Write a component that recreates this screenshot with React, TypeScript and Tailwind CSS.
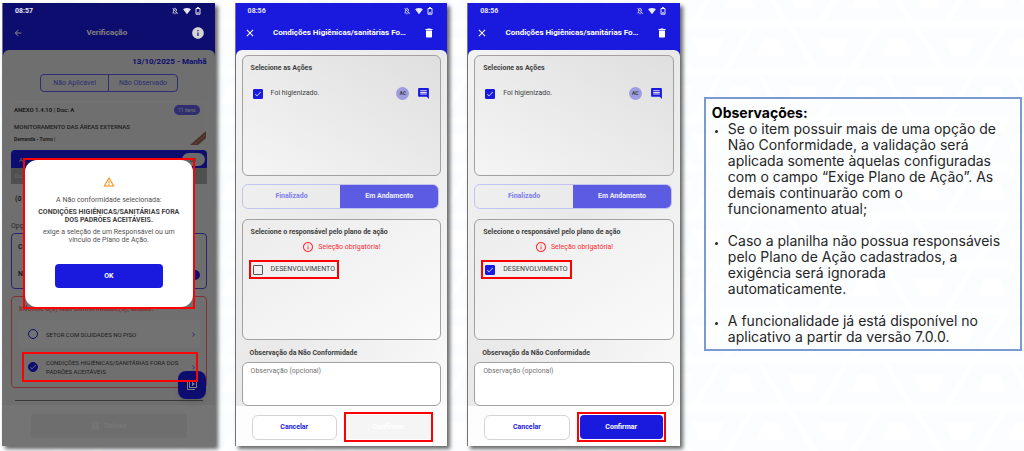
import React, { useState } from 'react';
import {
  MdArrowBack,
  MdCheck,
  MdChevronRight,
  MdClose,
  MdComment,
  MdDelete,
  MdInfo,
  MdInfoOutline,
  MdOutlineNotificationsOff,
  MdOutlineVideoLibrary,
  MdSave,
  MdSignalWifi4Bar,
  MdWarningAmber,
} from 'react-icons/md';

const BackgroundPattern: React.FC = () => (
  <svg className="absolute inset-0 -z-10 h-full w-full" aria-hidden="true">
    <defs>
      <pattern id="trapezoids" width="126" height="96" patternUnits="userSpaceOnUse">
        <g fill="#fcfdff">
          <path d="M-2 27h34l24 42h-82zM124 27h34l24 42h-82zM37 27h82l-26 42h-30z" />
          <path d="M93 75h34l24 42h-82zM6 75h82l-26 42h-30zM-33 75h34l24 42h-82z" />
          <path d="M93 -21h34l24 42h-82zM6 -21h82l-26 42h-30zM-33 -21h34l24 42h-82z" />
        </g>
        <g fill="#ffffff">
          <path d="M8 38h14l8 18h-30zM62 38h32l-8 18h-16z" />
          <path d="M103 86h14l8 18h-30zM31 86h32l-8 18h-16z" />
          <path d="M103 -10h14l8 18h-30zM31 -10h32l-8 18h-16z" />
        </g>
      </pattern>
    </defs>
    <rect width="100%" height="100%" fill="url(#trapezoids)" />
  </svg>
);

const StatusBar: React.FC<{ time: string }> = ({ time }) => (
  <div className="relative z-20 flex h-4 items-center justify-between pr-3.5 pl-3 text-white/90">
    <span className="text-[7px] font-bold">{time}</span>
    <span className="flex items-center gap-1">
      <MdOutlineNotificationsOff size={8} />
      <MdSignalWifi4Bar size={8} />
      <svg width="6" height="8" viewBox="0 0 6 8" fill="none" stroke="currentColor">
        <path d="M1 1.5h4v5.7H1zM2 .6h2M2 5.8h2" />
      </svg>
    </span>
  </div>
);

interface CheckProps {
  label: string;
  defaultChecked?: boolean;
  round?: boolean;
}

const CheckField: React.FC<CheckProps> = ({ label, defaultChecked, round }) => (
  <label className="flex flex-1 items-center gap-2 text-[7px] leading-[9px] text-neutral-700">
    <span className="relative grid shrink-0 place-items-center text-white">
      <input
        type="checkbox"
        defaultChecked={defaultChecked}
        className={
          round
            ? 'peer block size-[10px] appearance-none rounded-full border border-[#1a1adf] checked:bg-[#1a1adf]'
            : 'peer block size-[10px] appearance-none rounded-[1px] border border-neutral-600 checked:border-[#1a1adf] checked:bg-[#1a1adf]'
        }
      />
      <MdCheck size={8} className="pointer-events-none absolute hidden peer-checked:block" />
    </span>
    <span className={round ? 'text-[6px]' : ''}>{label}</span>
  </label>
);

const phoneClass =
  'relative flex flex-col border-l border-neutral-500 bg-[#1a1adf] shadow-[3px_3px_4px_rgba(0,0,0,0.6)]';

const PlanScreen: React.FC<{ selected: boolean; id: string }> = ({ selected, id }) => {
  const [status, setStatus] = useState('Em Andamento');

  return (
    <section className={phoneClass}>
      <StatusBar time="08:56" />
      <header className="flex h-7 items-center px-2 text-white">
        <button type="button" aria-label="Fechar">
          <MdClose size={12} />
        </button>
        <h1 className="flex-1 text-center text-[8px] font-bold">Condições Higiênicas/sanitárias Fo…</h1>
        <button type="button" aria-label="Excluir" className="pr-1">
          <MdDelete size={12} />
        </button>
      </header>

      <div className="mt-[3px] rounded-t-md bg-linear-to-br from-[#f3f3f3] via-[#e9e9e9] to-[#fafafa] px-1.5 pt-[5px]">
        <div className="min-h-[121px] rounded-md border border-neutral-400 bg-linear-to-tr from-neutral-100 to-[#dfdfdf] px-2 pt-2">
          <h2 className="text-[7px] leading-[9px] font-bold text-neutral-700">Selecione as Ações</h2>
          <div className="mt-3.5 flex items-center gap-2 pr-0.5 pl-0.5">
            <CheckField label="Foi higienizado." defaultChecked />
            <span className="grid size-[13px] place-items-center rounded-full bg-[#9d9de0] text-[5px] font-bold text-neutral-700">
              AC
            </span>
            <button type="button" aria-label="Comentário" className="text-[#1a1adf]">
              <MdComment size={13} />
            </button>
          </div>
        </div>

        <div className="mt-2 mr-0.5 flex h-[25px] overflow-hidden rounded-md border border-[#c3c3f3] text-[7px] font-bold">
          {['Finalizado', 'Em Andamento'].map((item) => (
            <button
              key={item}
              type="button"
              onClick={() => setStatus(item)}
              className={status === item ? 'flex-1 bg-[#5c5ce3] text-white/90' : 'flex-1 text-[#7c7cec]'}
            >
              {item}
            </button>
          ))}
        </div>

        <div className="mt-2.5 min-h-[121px] rounded-md border border-neutral-400 bg-linear-to-br from-[#ececec] to-neutral-50 px-1 pt-2">
          <h2 className="px-1 text-[7px] leading-[9px] font-bold text-neutral-700">
            Selecione o responsável pelo plano de ação
          </h2>
          <p className="mt-1 flex items-center justify-center gap-1 text-[7px] leading-[9px] text-red-500">
            <MdInfoOutline size={12} />
            Seleção obrigatória!
          </p>
          <div className="mt-[7px] ml-0.5 flex h-[19px] w-fit items-center border-2 border-[#ff0000] px-0.5">
            <CheckField label="DESENVOLVIMENTO" defaultChecked={selected} />
          </div>
        </div>

        <label htmlFor={id} className="mt-[7px] block px-2 text-[7px] leading-[13px] font-bold text-neutral-700">
          Observação da Não Conformidade
        </label>
        <textarea
          id={id}
          placeholder="Observação (opcional)"
          className="mt-0.5 block h-11 w-full resize-none rounded-md border border-neutral-400 bg-white px-2 py-1 text-[7px] leading-[9px] placeholder:text-neutral-500"
        />
      </div>

      <footer className="flex flex-1 items-center gap-[7px] bg-[#fdfdfd] pt-1.5 pr-3.5 pb-1 pl-4">
        <button
          type="button"
          className="h-[25px] flex-1 rounded-md border border-neutral-300 bg-white text-[7px] font-bold text-[#1a1adf]"
        >
          Cancelar
        </button>
        <div className="flex h-[30px] flex-1 border-2 border-[#ff0000] p-px">
          <button
            type="button"
            disabled={!selected}
            className="flex-1 rounded bg-[#1a1adf] text-[7px] font-bold text-white disabled:rounded-none disabled:bg-neutral-100"
          >
            Confirmar
          </button>
        </div>
      </footer>
    </section>
  );
};

const WarningDialog: React.FC = () => (
  <div
    role="dialog"
    aria-label="Aviso"
    className="absolute inset-x-5 top-[155px] z-30 border-2 border-[#ff0000]"
  >
    <div className="flex h-[147px] flex-col items-center rounded-xl bg-white pt-4 text-center text-[7px] leading-2 text-neutral-600">
      <MdWarningAmber size={12} className="text-orange-400" />
      <p className="mt-2">A Não conformidade selecionada:</p>
      <p className="mt-1 px-2 font-bold text-neutral-700">
        CONDIÇÕES HIGIÊNICAS/SANITÁRIAS FORA DOS PADRÕES ACEITÁVEIS.
      </p>
      <p className="mt-1 px-3">exige a seleção de um Responsável ou um vínculo de Plano de Ação.</p>
      <button type="button" className="mt-5 h-6 w-[108px] rounded bg-[#1a1adf] font-bold text-white">
        OK
      </button>
    </div>
  </div>
);

const CheckScreen: React.FC = () => (
  <section className={phoneClass}>
    <StatusBar time="08:57" />
    <header className="flex h-7 items-center px-2.5 text-white">
      <button type="button" aria-label="Voltar">
        <MdArrowBack size={10} />
      </button>
      <h1 className="flex-1 text-center text-[8px] font-bold">Verificação</h1>
      <button type="button" aria-label="Informações" className="relative z-20 text-neutral-300">
        <MdInfo size={14} />
      </button>
    </header>

    <div className="mt-[3px] rounded-t-md bg-[#dedede] px-2 pt-[7px] pb-1 text-neutral-700">
      <p className="text-right text-[8px] leading-[10px] font-bold text-[#1a1adf]">13/10/2025 - Manhã</p>
      <div className="mx-auto mt-[7px] flex h-[18px] w-[138px] rounded border border-[#5c5ce3] text-[7px] text-[#5c5ce3]">
        <button type="button" className="flex-1 border-r border-[#5c5ce3]">Não Aplicável</button>
        <button type="button" className="flex-1">Não Observado</button>
      </div>

      <div className="relative mt-[9px] h-[45px] overflow-hidden rounded border border-neutral-200 px-0.5 text-[5px] leading-[6px] font-bold">
        <div className="flex h-4 items-center justify-between pr-1 text-[6px]">
          <span>ANEXO 1.4.10 | Doc: A</span>
          <span className="rounded-full bg-[#5c5ce3] px-1 py-0.5 text-[5px] font-normal text-neutral-200">11 itens</span>
        </div>
        <p className="mt-1.5 text-[6px] font-medium">MONITORAMENTO DAS ÁREAS EXTERNAS</p>
        <p className="mt-1.5">Demanda - Turno |</p>
        <svg className="absolute right-0 bottom-0" width="16" height="14" viewBox="0 0 16 14">
          <path d="M0 14L16 0v7L8 14z" fill="#9a6250" />
          <path d="M5 13L15 4" stroke="#d8b8ac" strokeDasharray="1 1" />
        </svg>
      </div>

      <div className="mt-1 flex h-[18px] items-center justify-between rounded-t bg-[#1a1adf] pr-0.5 pl-2 text-[6px] text-neutral-300">
        <span>A</span>
        <span className="rounded-full bg-neutral-300 px-2 py-0.5 text-neutral-600">01</span>
      </div>
      <div className="h-4 bg-neutral-400 px-1 text-[6px] leading-4 text-neutral-300">Do</div>
      <p className="mt-2.5 px-1 text-[7px] leading-[10px] font-bold">(0</p>
      <p className="mt-[17px] text-[7px] leading-[10px] text-neutral-600">Opções</p>

      <div className="mt-0.5 flex h-14 flex-col justify-around rounded border border-[#4a4ae0] px-1.5 text-[7px] font-bold">
        <span>C</span>
        <span className="flex items-center justify-between">
          N
          <span className="size-2.5 rounded-full bg-[#1a1adf]" />
        </span>
      </div>

      <div className="relative mt-[7px] h-[92px] rounded border border-red-400 px-1.5 pt-2">
        <p className="px-px text-[7px] leading-[9px] font-bold text-red-400">Informe a(s) Não Conformidade(s), abaixo:</p>
        <div className="mt-1.5 flex h-7 items-center rounded bg-[#e4e4e4] pr-0.5 pl-2.5">
          <CheckField label="SETOR COM SUJIDADES NO PISO" round />
          <MdChevronRight size={9} className="text-[#5c5ce3]" />
        </div>
        <div className="relative mt-1 flex h-[30px] items-center pr-0.5 pl-2.5">
          <CheckField label="CONDIÇÕES HIGIÊNICAS/SANITÁRIAS FORA DOS PADRÕES ACEITÁVEIS." defaultChecked round />
          <MdChevronRight size={9} className="text-[#5c5ce3]" />
          <span className="absolute inset-y-0 right-0.5 left-1 z-20 border-2 border-[#ff0000]" />
        </div>
        <button
          type="button"
          aria-label="Vídeos"
          className="absolute right-0 -bottom-3 grid size-7 place-items-center rounded-lg bg-[#1a1adf] text-white shadow-md"
        >
          <MdOutlineVideoLibrary size={12} />
        </button>
      </div>
      <hr className="mx-1 mt-3 border-neutral-500" />
    </div>
    <footer className="flex flex-1 items-center justify-center bg-[#e8e8e8] px-7 py-2">
      <button
        type="button"
        className="flex h-6 flex-1 items-center justify-center gap-1 rounded bg-[#dcdcdc] text-[8px] font-bold text-[#ececec]"
      >
        <MdSave size={9} /> Salvar
      </button>
    </footer>

    <div className="absolute inset-0 z-10 bg-black/50" />
    <WarningDialog />
  </section>
);

const notes = [
  'Se o item possuir mais de uma opção de Não Conformidade, a validação será aplicada somente àquelas configuradas com o campo “Exige Plano de Ação”. As demais continuarão com o funcionamento atual;',
  'Caso a planilha não possua responsáveis pelo Plano de Ação cadastrados, a exigência será ignorada automaticamente.',
  'A funcionalidade já está disponível no aplicativo a partir da versão 7.0.0.',
];

const App: React.FC = () => (
  <main className="relative isolate grid min-h-screen grid-cols-[33fr_33fr_33fr_50fr] items-start gap-5 bg-[#feffff] px-0.5 pt-[3px] pb-1 font-[Roboto,sans-serif]">
    <BackgroundPattern />
    <div className="col-span-3 grid grid-cols-3 gap-5">
      <CheckScreen />
      <PlanScreen selected={false} id="observacao-pendente" />
      <PlanScreen selected id="observacao-selecionada" />
    </div>
    <aside className="mt-[94px] ml-1 border-2 border-[#7b9ad0] pt-1.5 pr-4 pb-1 pl-1.5 font-[Inter,sans-serif] text-sm leading-4 text-neutral-800">
      <h2 className="font-bold text-black">Observações:</h2>
      <ul className="flex list-disc flex-col gap-4 pl-4 marker:text-[10px]">
        {notes.map((note) => (
          <li key={note}>{note}</li>
        ))}
      </ul>
    </aside>
  </main>
);

export default App;
